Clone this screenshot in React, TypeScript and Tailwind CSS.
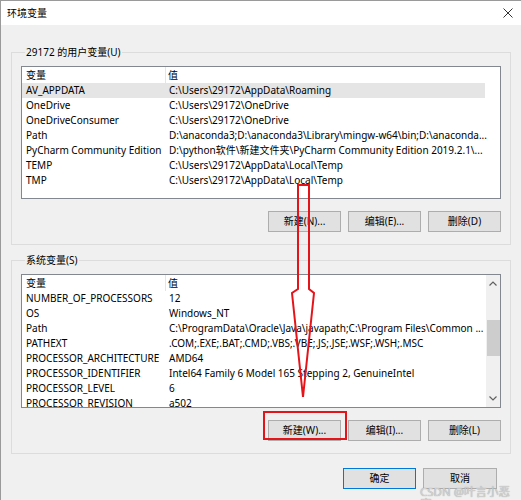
import React from "react";

type Row = { name: string; value: string };

const userRows: Row[] = [
  { name: "AV_APPDATA", value: "C:\\Users\\29172\\AppData\\Roaming" },
  { name: "OneDrive", value: "C:\\Users\\29172\\OneDrive" },
  { name: "OneDriveConsumer", value: "C:\\Users\\29172\\OneDrive" },
  { name: "Path", value: "D:\\anaconda3;D:\\anaconda3\\Library\\mingw-w64\\bin;D:\\anaconda..." },
  { name: "PyCharm Community Edition", value: "D:\\python软件\\新建文件夹\\PyCharm Community Edition 2019.2.1\\..." },
  { name: "TEMP", value: "C:\\Users\\29172\\AppData\\Local\\Temp" },
  { name: "TMP", value: "C:\\Users\\29172\\AppData\\Local\\Temp" },
];

const sysRows: Row[] = [
  { name: "NUMBER_OF_PROCESSORS", value: "12" },
  { name: "OS", value: "Windows_NT" },
  { name: "Path", value: "C:\\ProgramData\\Oracle\\Java\\javapath;C:\\Program Files\\Common ..." },
  { name: "PATHEXT", value: ".COM;.EXE;.BAT;.CMD;.VBS;.VBE;.JS;.JSE;.WSF;.WSH;.MSC" },
  { name: "PROCESSOR_ARCHITECTURE", value: "AMD64" },
  { name: "PROCESSOR_IDENTIFIER", value: "Intel64 Family 6 Model 165 Stepping 2, GenuineIntel" },
  { name: "PROCESSOR_LEVEL", value: "6" },
  { name: "PROCESSOR_REVISION", value: "a502" },
];

const Chevron = ({ down }: { down?: boolean }) => (
  <svg width="8" height="5" viewBox="0 0 8 5" className={down ? "rotate-180" : ""}>
    <path d="M0.5 4.5 L4 1 L7.5 4.5" fill="none" stroke="#606060" strokeWidth="1.2" />
  </svg>
);

const ListView = ({
  rows,
  height,
  selected,
  scroll,
}: {
  rows: Row[];
  height: string;
  selected?: number;
  scroll?: boolean;
}) => (
  <div className={`flex w-[480px] ${height} overflow-hidden border border-[#828790] bg-white`}>
    <div className="flex-1 overflow-hidden">
      <div className="flex h-[16px] items-center">
        <div className="h-full w-[144px] border-r border-[#e5e5e5] pl-[4px] leading-[16px]">变量</div>
        <div className="pl-[2px]">值</div>
      </div>
      {rows.map((r, i) => (
        <div
          key={r.name + i}
          className={`flex h-[15px] w-[463px] items-center whitespace-nowrap ${
            i === selected ? "bg-[#e5e5e5]" : ""
          }`}
        >
          <div className="w-[145px] shrink-0 overflow-hidden pl-[4px]">{r.name}</div>
          <div className="shrink-0 pl-[2px]">{r.value}</div>
        </div>
      ))}
    </div>
    {scroll && (
      <div className="flex w-[14px] flex-col bg-[#f0f0f0]">
        <div className="flex h-[17px] items-center justify-center">
          <Chevron />
        </div>
        <div className="flex-1">
          <div className="mx-auto mt-[28px] h-[36px] w-[13px] bg-[#cdcdcd]" />
        </div>
        <div className="flex h-[17px] items-center justify-center">
          <Chevron down />
        </div>
      </div>
    )}
  </div>
);

const Btn = ({ label, focus, w = "w-[73px]" }: { label: string; focus?: boolean; w?: string }) => (
  <div
    className={`flex ${w} h-[21px] items-center justify-center border bg-[#e1e1e1] ${
      focus ? "border-[#0078d7]" : "border-[#adadad]"
    }`}
  >
    {label}
  </div>
);

const Group = ({
  title,
  children,
}: {
  title: string;
  children: React.ReactNode;
}) => (
  <fieldset className="ml-[10px] w-[500px] border border-[#dcdcdc] px-[9px] pb-[12px] pt-[6px]">
    <legend className="ml-[4px] h-[16px] px-px leading-[16px]">{title}</legend>
    {children}
  </fieldset>
);

export default function App() {
  return (
    <div className="relative h-[500px] w-[521px] overflow-hidden border-l border-t border-[#9a9a9a] bg-[#f0f0f0] font-['Noto_Sans','Noto_Sans_CJK_SC',sans-serif] text-[10px] text-black">
      <div className="flex h-[24px] items-center justify-between bg-white pl-[6px] pr-[8px]">
        <span>环境变量</span>
        <svg width="10" height="10" viewBox="0 0 10 10">
          <path d="M0.5 0.5 L9.5 9.5 M9.5 0.5 L0.5 9.5" stroke="#333" strokeWidth="1" />
        </svg>
      </div>

      <div className="pt-[19px]">
        <Group title="29172 的用户变量(U)">
          <ListView rows={userRows} height="h-[133px]" selected={0} />
          <div className="mt-[12px] flex justify-end gap-[7px]">
            <Btn label="新建(N)..." />
            <Btn label="编辑(E)..." />
            <Btn label="删除(D)" />
          </div>
        </Group>

        <div className="mt-[7px]">
          <Group title="系统变量(S)">
            <ListView rows={sysRows} height="h-[134px]" scroll />
            <div className="mt-[12px] flex justify-end gap-[7px]">
              <Btn label="新建(W)..." />
              <Btn label="编辑(I)..." />
              <Btn label="删除(L)" />
            </div>
          </Group>
        </div>

        <div className="mt-[14px] flex justify-end gap-[7px] pr-[24px]">
          <Btn label="确定" focus />
          <Btn label="取消" w="w-[74px]" />
        </div>
      </div>

      {/* annotation overlays */}
      <div className="pointer-events-none absolute left-[262px] top-[410px] h-[29px] w-[84px] border-2 border-[#e5141b]" />
      <svg className="pointer-events-none absolute left-[-1px] top-[-1px]" width="521" height="500" viewBox="0 0 521 500">
        <path
          d="M298 185 L309 185 L309 289 L314 293 L303 397 L292 293 L298 289 Z"
          fill="none"
          stroke="#e5141b"
          strokeWidth="2"
          strokeLinejoin="miter"
        />
      </svg>
      <div className="pointer-events-none absolute left-[419px] top-[485px] text-[11.5px] leading-[12px] text-[#d4d4d4] [text-shadow:0_0_1px_#8a8a8a]">
        CSDN @叶言小恶魔
      </div>
    </div>
  );
}
